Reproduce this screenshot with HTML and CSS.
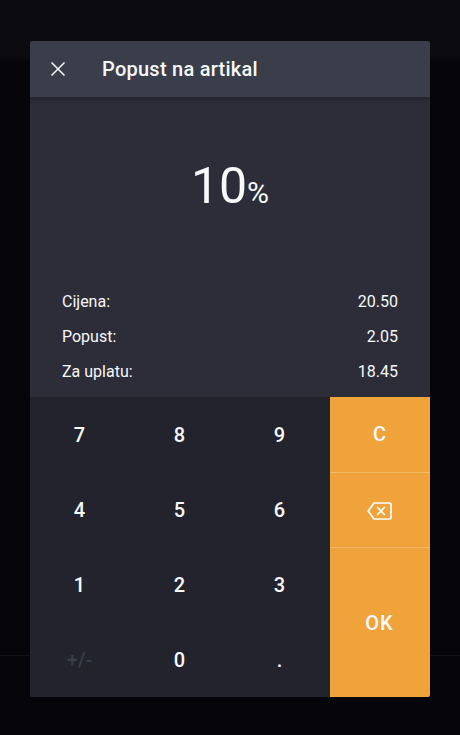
FILE: index.html
```html
<!DOCTYPE html>
<html lang="en">

<head>
    <meta charset="UTF-8">
    <title>Popust na artikal</title>
    <link rel="stylesheet" href="styles.css">
</head>

<body>
    <!-- page behind the dialog -->
    <div class="page">
        <div class="page_top"></div>
        <div class="page_main"></div>
        <div class="page_bottom"></div>
    </div>

    <div class="dialog">
        <div class="head">
            <svg class="close" width="16" height="16" viewBox="0 0 16 16">
                <path d="M1.5 1.5L14.5 14.5M14.5 1.5L1.5 14.5" />
            </svg>
            <div class="title">Popust na artikal</div>
        </div>

        <div class="info">
            <div class="amount">10<span class="percent">%</span></div>
            <div class="rows">
                <div class="row"><span>Cijena:</span><span>20.50</span></div>
                <div class="row"><span>Popust:</span><span>2.05</span></div>
                <div class="row"><span>Za uplatu:</span><span>18.45</span></div>
            </div>
        </div>

        <div class="pad">
            <div class="digits">
                <div class="key">7</div>
                <div class="key">8</div>
                <div class="key">9</div>
                <div class="key">4</div>
                <div class="key">5</div>
                <div class="key">6</div>
                <div class="key">1</div>
                <div class="key">2</div>
                <div class="key">3</div>
                <div class="key off">+/-</div>
                <div class="key">0</div>
                <div class="key">.</div>
            </div>
            <div class="actions">
                <div class="act clear">C</div>
                <div class="act line">
                    <svg class="back" width="25" height="18" viewBox="0 0 25 18">
                        <path d="M7 1H22.5A1.5 1.5 0 0 1 24 2.5V15.5A1.5 1.5 0 0 1 22.5 17H7L1.2 9Z" />
                        <path d="M10.2 5L17.8 13M17.8 5L10.2 13" />
                    </svg>
                </div>
                <div class="act line ok">OK</div>
            </div>
        </div>
    </div>
</body>

</html>
```

FILE: styles.css
```css
* {
    padding: 0;
    margin: 0;
    box-sizing: border-box;
}

html,
body {
    height: 100%;
}

body {
    background-color: #05050a;
    font-family: Roboto, "Liberation Sans", sans-serif;
    color: #f7f8fa;
    overflow: hidden;
}

.page {
    height: 735px;
    display: flex;
    flex-direction: column;
}

.page_top {
    height: 62px;
    background: linear-gradient(#0c0c10 88%, #05050a);
}

.page_main {
    height: 594px;
    border-bottom: 1px solid #121217;
}

.page_bottom {
    flex: 1;
}

.dialog {
    width: 400px;
    height: 656px;
    position: absolute;
    top: 41px;
    left: 30px;
    display: flex;
    flex-direction: column;
    border-radius: 2px;
    overflow: hidden;
}

.head {
    height: 56px;
    background-color: #3a3e4a;
    display: flex;
    align-items: center;
    padding-left: 20px;
    position: relative;
    box-shadow: 0 2px 5px rgba(0, 0, 0, 0.2);
}

.close {
    fill: none;
    stroke: #f7f8fa;
    stroke-width: 1.5;
}

.title {
    margin-left: 36px;
    font-size: 20px;
    font-weight: 500;
    letter-spacing: 0.25px;
}

.info {
    height: 300px;
    background-color: #2c2d39;
    display: flex;
    flex-direction: column;
    padding: 0 32px 8px;
}

.amount {
    height: 187px;
    padding-top: 56px;
    text-align: center;
    font-size: 50px;
    line-height: 66px;
}

.percent {
    font-size: 30px;
}

.rows {
    display: flex;
    flex-direction: column;
}

.row {
    height: 35px;
    display: flex;
    justify-content: space-between;
    align-items: center;
    font-size: 16px;
}

.pad {
    height: 300px;
    display: flex;
}

.digits {
    width: 300px;
    background-color: #22232d;
    display: grid;
    grid-template-columns: repeat(3, 100px);
    grid-template-rows: repeat(4, 75px);
}

.key {
    display: flex;
    align-items: center;
    justify-content: center;
    padding-right: 1px;
    font-size: 20px;
    font-weight: 500;
}

.off {
    color: #3b3d48;
}

.actions {
    width: 100px;
    background-color: #f0a33a;
    display: flex;
    flex-direction: column;
}

.act {
    height: 75px;
    display: flex;
    align-items: center;
    justify-content: center;
    padding-right: 1px;
    font-size: 20px;
    font-weight: 500;
}

.clear {
    padding-bottom: 2px;
}

.line {
    border-top: 1px solid #f4b765;
}

.ok {
    height: 150px;
    letter-spacing: 1px;
}

.back {
    margin-top: 2px;
    fill: none;
    stroke: #fff;
    stroke-width: 1.7;
}
```
